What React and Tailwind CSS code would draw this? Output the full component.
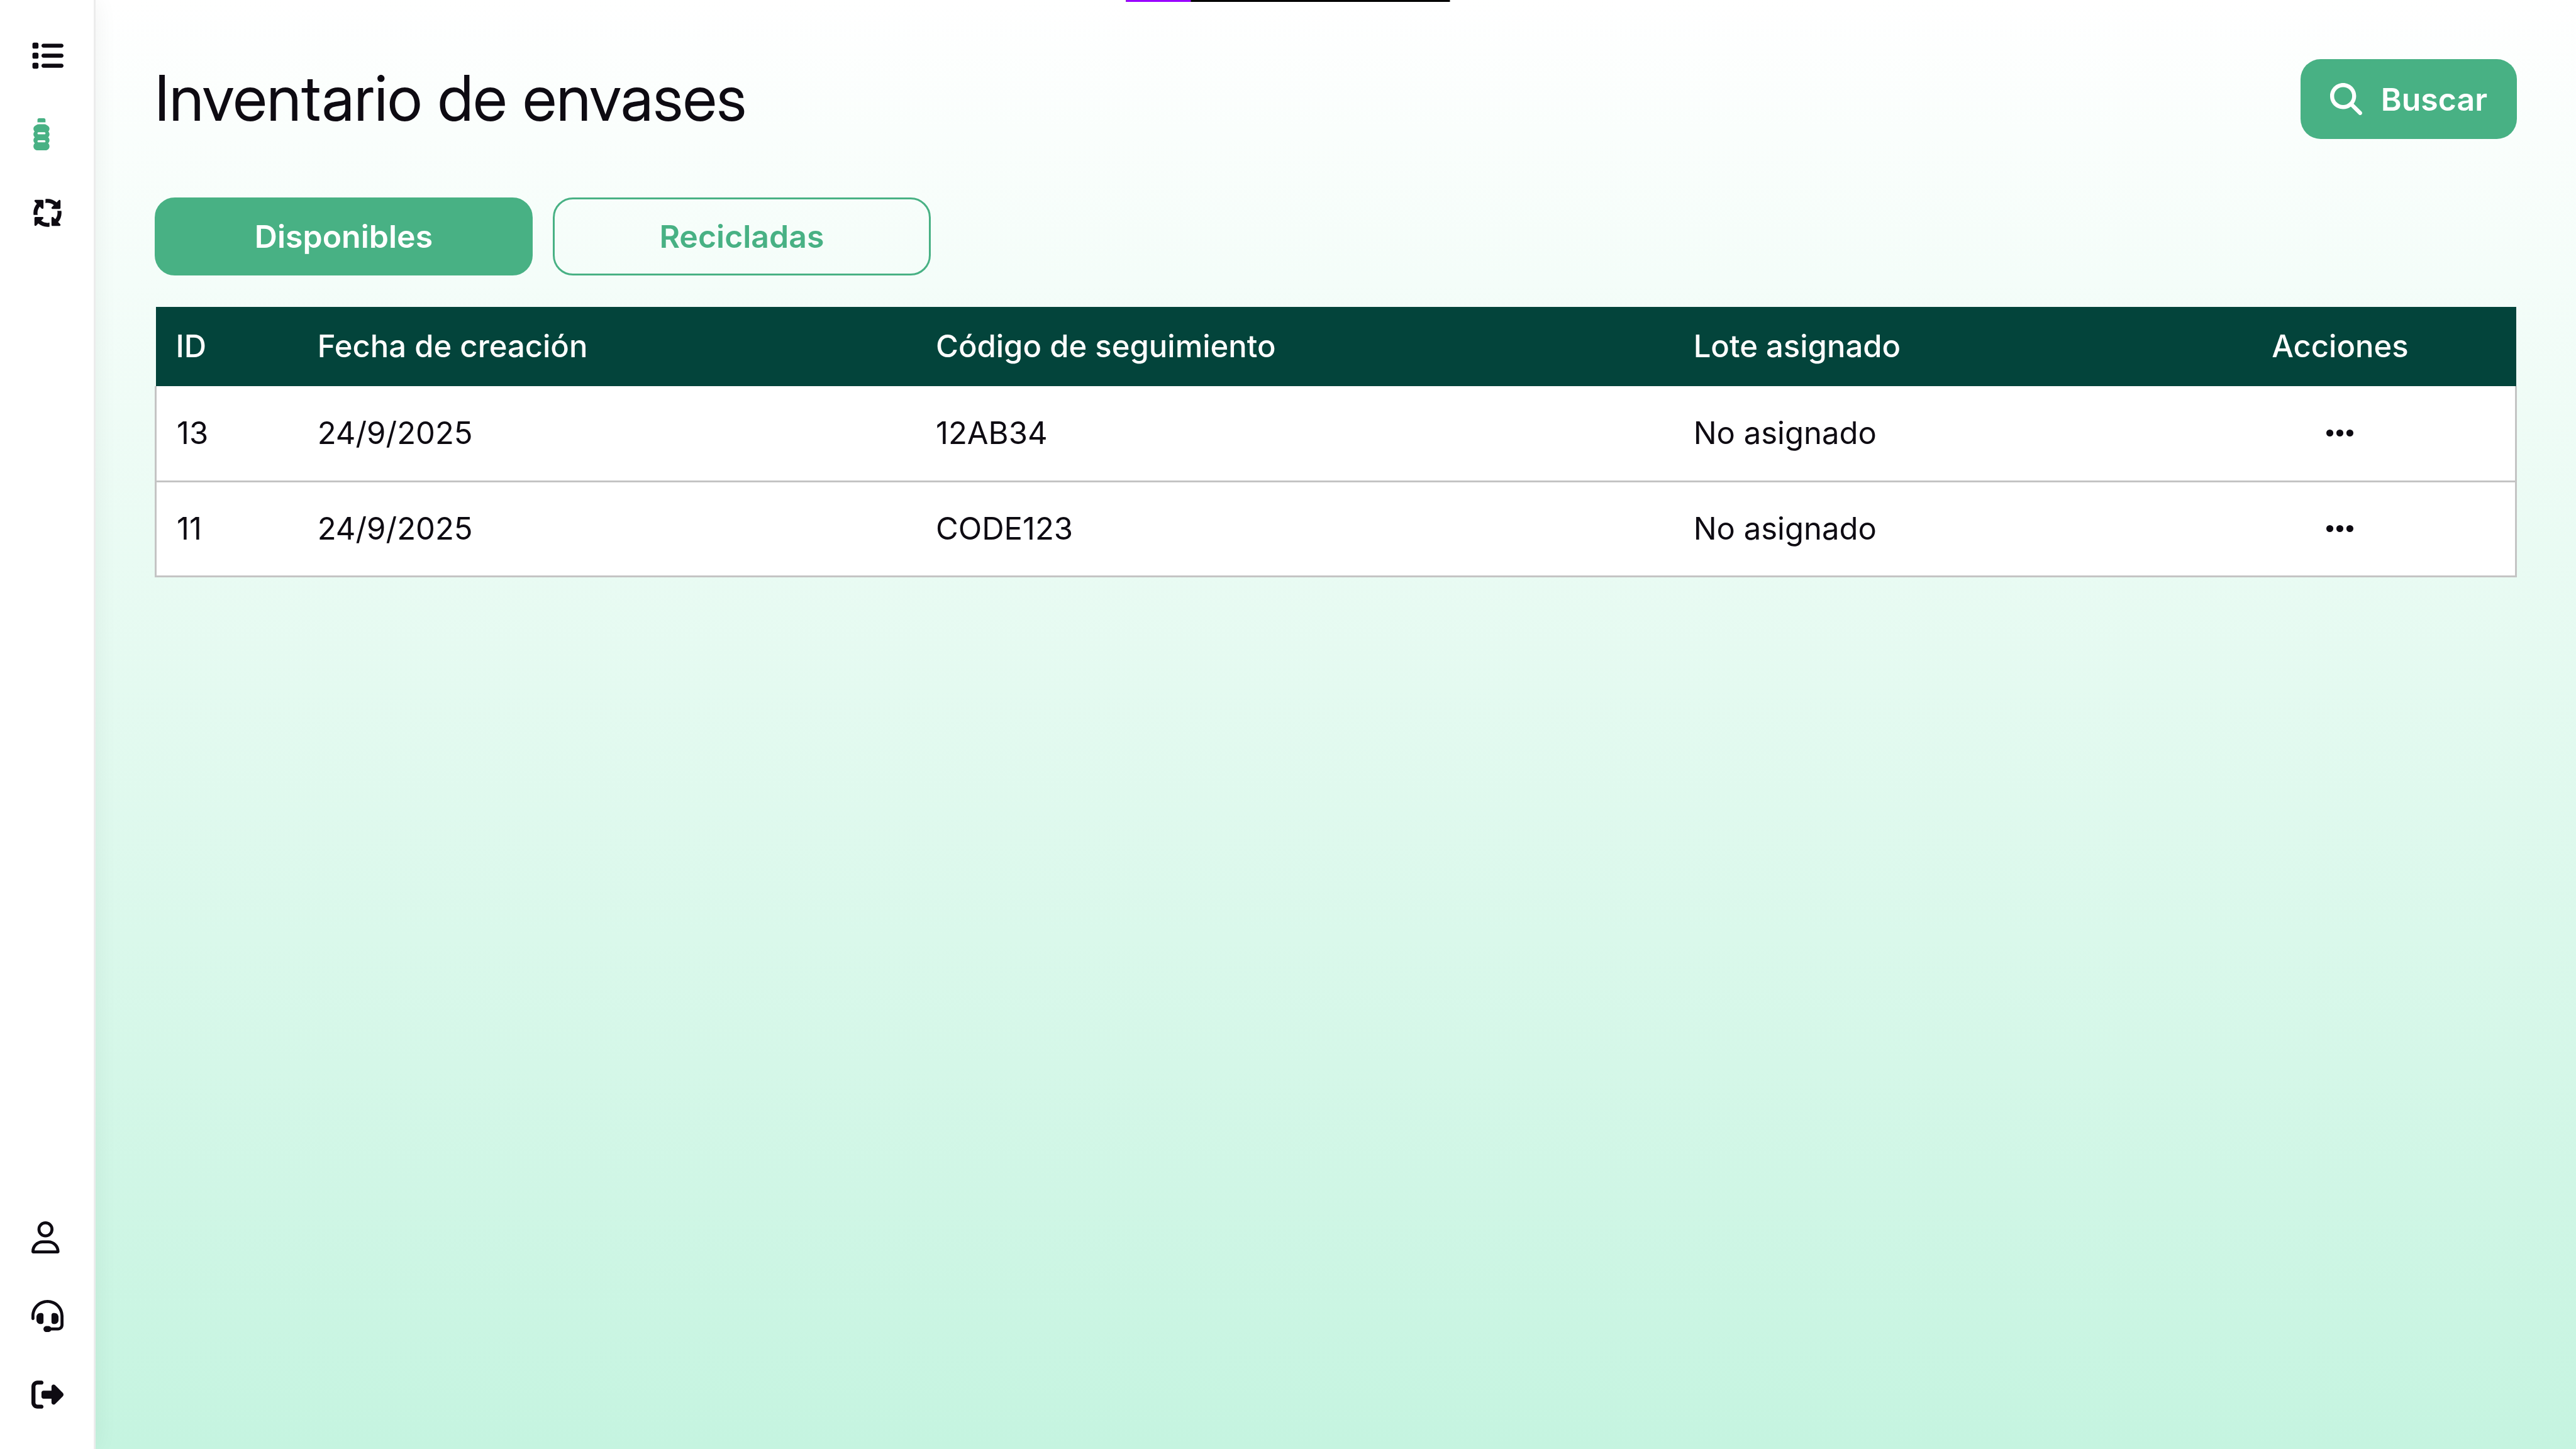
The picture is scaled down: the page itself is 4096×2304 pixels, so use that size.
import React from "react";
import {
  FaList,
  FaBottleWater,
  FaArrowsSpin,
  FaRegUser,
  FaHeadset,
  FaRightFromBracket,
  FaMagnifyingGlass,
  FaEllipsis,
} from "react-icons/fa6";

const mainLinks = [
  { label: "Lotes", icon: FaList },
  { label: "Envases", icon: FaBottleWater, active: true },
  { label: "Reciclaje", icon: FaArrowsSpin },
];

const accountLinks = [
  { label: "Perfil", icon: FaRegUser },
  { label: "Soporte", icon: FaHeadset },
  { label: "Cerrar sesión", icon: FaRightFromBracket },
];

const rows = [
  { id: 13, date: "24/9/2025", code: "12AB34", batch: "No asignado" },
  { id: 11, date: "24/9/2025", code: "CODE123", batch: "No asignado" },
];

function NavGroup({ links }) {
  return (
    <ul className="flex flex-col gap-[74px]">
      {links.map(({ label, icon: Icon, active }) => (
        <li key={label}>
          <a
            href="#"
            aria-label={label}
            aria-current={active ? "page" : undefined}
            className={active ? "block text-[#48b184]" : "block"}
          >
            <Icon preserveAspectRatio="xMinYMid" className="size-[51px]" />
          </a>
        </li>
      ))}
    </ul>
  );
}

function Sidebar() {
  return (
    <nav className="z-10 flex w-[152px] shrink-0 flex-col justify-between border-r-3 border-[#ececec] bg-white pt-[63px] pb-[61px] pl-[50px] shadow-[0_0_36px_rgba(0,0,0,0.06)]">
      <NavGroup links={mainLinks} />
      <NavGroup links={accountLinks} />
    </nav>
  );
}

function Tab({ active, children }) {
  return (
    <button
      type="button"
      aria-pressed={active}
      className={
        active
          ? "h-[124px] w-[16%] rounded-[32px] border-3 border-[#48b184] bg-[#48b184] font-semibold text-white"
          : "h-[124px] w-[16%] rounded-[32px] border-3 border-[#48b184] font-semibold text-[#48b184]"
      }
    >
      {children}
    </button>
  );
}

function BottlesTable() {
  return (
    <table className="mt-[50px] w-full table-fixed border-collapse text-left text-[49px]">
      <thead className="bg-[#03443b] text-white">
        <tr className="h-[126px]">
          <th className="w-[6%] px-8 font-medium">ID</th>
          <th className="w-[26.2%] px-8 font-medium">Fecha de creación</th>
          <th className="w-[32.1%] px-8 font-medium">Código de seguimiento</th>
          <th className="w-[20.8%] px-8 font-medium">Lote asignado</th>
          <th className="px-8 text-center font-medium">Acciones</th>
        </tr>
      </thead>
      <tbody className="bg-white">
        {rows.map((row) => (
          <tr key={row.id} className="h-[151px] border-x-3 border-b-3 border-[#c4c4c4]">
            <td className="px-8">{row.id}</td>
            <td className="px-8">{row.date}</td>
            <td className="px-8">{row.code}</td>
            <td className="px-8">{row.batch}</td>
            <td className="px-8">
              <button type="button" aria-label="Acciones" className="mx-auto block">
                <FaEllipsis className="size-[51px]" />
              </button>
            </td>
          </tr>
        ))}
      </tbody>
    </table>
  );
}

export default function App() {
  return (
    <div className="relative flex min-h-screen bg-linear-to-b from-white to-[#c5f4e0] font-[Inter,sans-serif] text-[50px] leading-[76px] text-[#0e0b12]">
      <div className="absolute top-0 left-1/2 flex h-[3px] w-[515px] -translate-x-1/2 bg-black">
        <div className="w-1/5 bg-[#9a00ff]" />
      </div>
      <Sidebar />
      <main className="flex min-w-0 flex-1 flex-col p-[94px]">
        <header className="flex items-start justify-between">
          <h1 className="font-['Inter_Display',Inter,sans-serif] text-[100px] leading-[124px]">
            Inventario de envases
          </h1>
          <button
            type="button"
            className="flex h-[127px] items-center gap-[30px] rounded-[32px] bg-[#48b184] px-[47px] font-semibold text-white"
          >
            <FaMagnifyingGlass className="size-[51px]" />
            Buscar
          </button>
        </header>
        <div className="mt-[93px] flex gap-8">
          <Tab active>Disponibles</Tab>
          <Tab active={false}>Recicladas</Tab>
        </div>
        <BottlesTable />
      </main>
    </div>
  );
}
